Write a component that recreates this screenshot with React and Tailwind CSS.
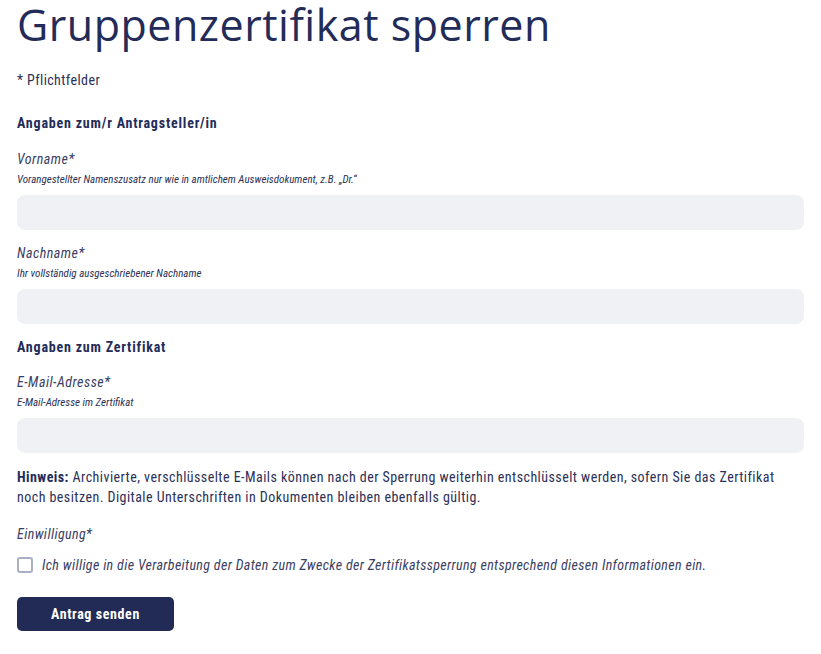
const Field = ({ label, hint, mt = "mt-[14px]" }) => (
  <div className={mt}>
    <label className="block text-[14px] italic leading-[18px] tracking-[0.5px] text-[#3b4063]">{label}</label>
    <p className="mt-[5px] text-[11px] italic leading-[14px] text-[#2b3157]">{hint}</p>
    <input
      type="text"
      className="mt-[8px] block h-[35px] w-full rounded-[8px] bg-[#f0f1f5] px-3 outline-none"
    />
  </div>
);

export default function App() {
  return (
    <div
      className="min-h-screen bg-white px-[17px] pt-px pb-6 text-[#232c59]"
      style={{ fontFamily: '"Roboto Condensed", "Liberation Sans Narrow", Roboto, sans-serif' }}
    >
      <h1
        className="-mt-[6px] text-[43px] leading-[60px] tracking-[0.5px] text-[#232c59]"
        style={{ fontFamily: '"Open Sans", "Noto Sans", sans-serif' }}
      >
        Gruppenzertifikat sperren
      </h1>

      <p className="mt-[16px] text-[14px] leading-[18px] tracking-[0.4px] text-[#2b3157]">* Pflichtfelder</p>

      <h2 className="mt-[25px] text-[14px] font-bold leading-[18px] tracking-[0.8px]">
        Angaben zum/r Antragsteller/in
      </h2>

      <Field
        mt="mt-[18px]"
        label="Vorname*"
        hint="Vorangestellter Namenszusatz nur wie in amtlichem Ausweisdokument, z.B. „Dr.“"
      />
      <Field label="Nachname*" hint="Ihr vollständig ausgeschriebener Nachname" />

      <h2 className="mt-[14px] text-[14px] font-bold leading-[18px] tracking-[0.8px]">Angaben zum Zertifikat</h2>

      <Field mt="mt-[17px]" label="E-Mail-Adresse*" hint="E-Mail-Adresse im Zertifikat" />

      <p className="mt-[14px] max-w-[780px] text-[14px] leading-[20px] tracking-[0.45px] text-[#2b3157]">
        <span className="font-bold text-[#232c59]">Hinweis:</span> Archivierte, verschlüsselte E-Mails
        können nach der Sperrung weiterhin entschlüsselt werden, sofern Sie das Zertifikat noch besitzen.
        Digitale Unterschriften in Dokumenten bleiben ebenfalls gültig.
      </p>

      <p className="mt-[18px] text-[14px] italic leading-[18px] tracking-[0.4px] text-[#3b4063]">Einwilligung*</p>

      <label className="mt-[13px] flex items-center gap-[9px] text-[14px] italic leading-[18px] tracking-[0.35px] text-[#3b4063]">
        <span className="h-[16px] w-[16px] shrink-0 rounded-[3px] border-2 border-[#a9b0c4] bg-white" />
        Ich willige in die Verarbeitung der Daten zum Zwecke der Zertifikatssperrung entsprechend diesen
        Informationen ein.
      </label>

      <button
        type="button"
        className="mt-[23px] h-[34px] w-[157px] rounded-[5px] bg-[#222b55] text-[14px] font-bold tracking-[0.6px] text-white"
      >
        Antrag senden
      </button>
    </div>
  );
}
